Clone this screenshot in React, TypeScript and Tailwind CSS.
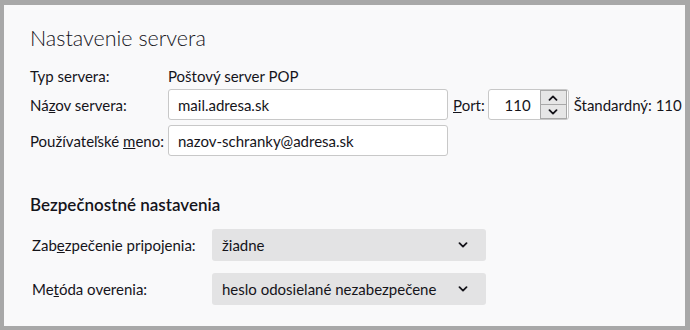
import React from 'react';

function Chevron({ up = false }: { up?: boolean }) {
    return (
        <svg width="10" height="6" viewBox="0 0 10 6" className={up ? 'rotate-180' : ''}>
            <path d="M1.5 1.2 L5 4.6 L8.5 1.2" fill="none" stroke="#15141a" strokeWidth="1.8" strokeLinecap="round" strokeLinejoin="round" />
        </svg>
    );
}

function TextInput({ value, className = '' }: { value: string; className?: string }) {
    return (
        <div className={`h-[31px] bg-white border border-[#c8c8c8] rounded-[3px] flex items-center px-[9px] ${className}`}>
            {value}
        </div>
    );
}

function SelectBox({ value }: { value: string }) {
    return (
        <div className="w-[274px] h-[32px] bg-[#e3e3e4] rounded-[3px] flex items-center justify-between pl-[10px] pr-[18px]">
            <span>{value}</span>
            <Chevron />
        </div>
    );
}

export default function App() {
    return (
        <div
            className="w-[690px] h-[330px] overflow-hidden bg-[#f9f9fa] border-t-[5px] border-l-[4px] border-r-[5px] border-b-[4px] border-[#a8a8a8] text-[#15141a] text-[15px] leading-[20px] whitespace-nowrap pl-[26px] pt-[18px]"
            style={{ fontFamily: 'Lato, "Open Sans", sans-serif' }}
        >
            <h1 className="text-[21.5px] font-light leading-[30px]">Nastavenie servera</h1>

            <div className="mt-[13px] flex flex-col">
                <div className="flex items-center h-[20px]">
                    <span className="w-[138px]">Typ servera:</span>
                    <span>Poštový server POP</span>
                </div>
                <div className="flex items-center mt-[3px]">
                    <span className="w-[138px]">
                        Ná<u>z</u>ov servera:
                    </span>
                    <TextInput value="mail.adresa.sk" className="w-[280px]" />
                    <span className="ml-[5px]">
                        <u>P</u>ort:
                    </span>
                    <div className="ml-[3px] w-[81px] h-[31px] bg-white border border-[#c8c8c8] rounded-[3px] flex items-center">
                        <span className="flex-1 text-right pr-[9px]">110</span>
                        <div className="w-[27px] h-[29px] mr-[1px] flex flex-col border border-[#a8a8a8] bg-[#e6e6e6]">
                            <div className="flex-1 flex items-center justify-center border-b border-[#a8a8a8]">
                                <Chevron up />
                            </div>
                            <div className="flex-1 flex items-center justify-center">
                                <Chevron />
                            </div>
                        </div>
                    </div>
                    <span className="ml-[5px]">Štandardný: 110</span>
                </div>
                <div className="flex items-center mt-[5px]">
                    <span className="w-[138px]">
                        Používateľské <u>m</u>eno:
                    </span>
                    <TextInput value="nazov-schranky@adresa.sk" className="w-[280px]" />
                </div>
            </div>

            <h2 className="mt-[38px] text-[17px] font-semibold leading-[22px]">Bezpečnostné nastavenia</h2>

            <div className="mt-[13px] flex flex-col gap-[12px] pl-[2px]">
                <div className="flex items-center">
                    <span className="w-[180px]">
                        Zab<u>e</u>zpečenie pripojenia:
                    </span>
                    <SelectBox value="žiadne" />
                </div>
                <div className="flex items-center">
                    <span className="w-[180px]">
                        Me<u>t</u>óda overenia:
                    </span>
                    <SelectBox value="heslo odosielané nezabezpečene" />
                </div>
            </div>
        </div>
    );
}
